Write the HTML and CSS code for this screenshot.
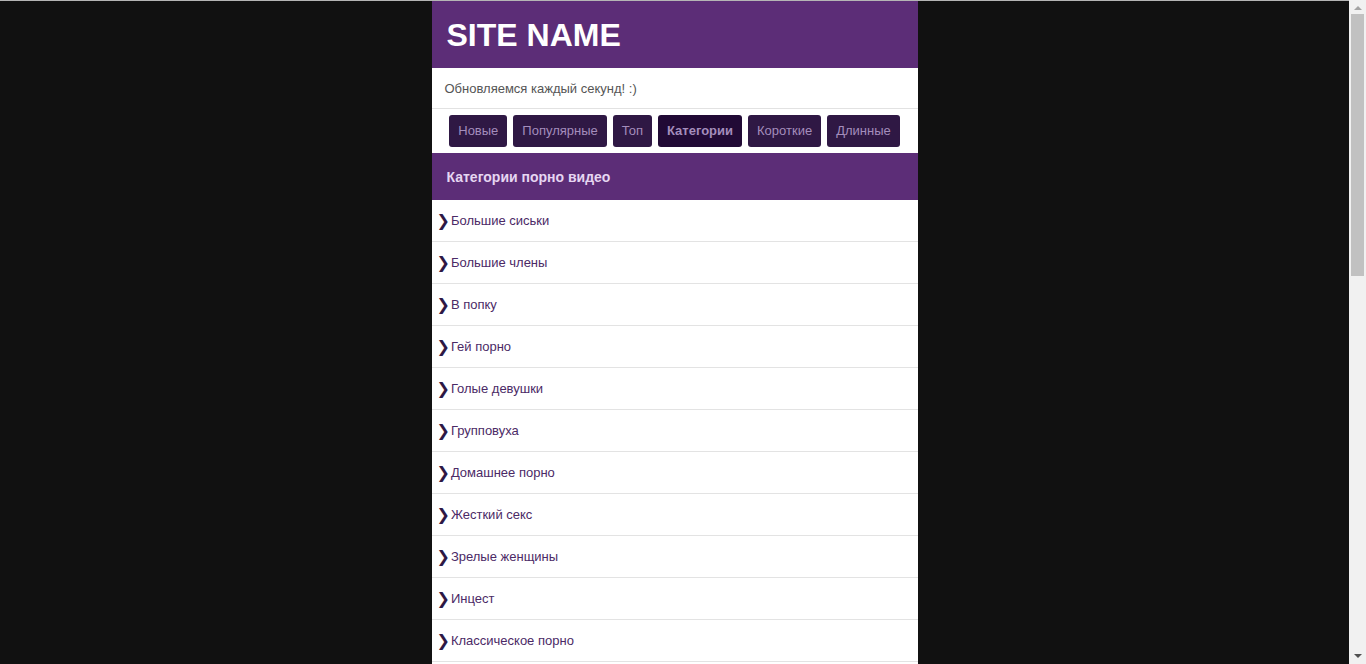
FILE: index.html
```html
<!DOCTYPE html>
<html lang="ru">
<head>
<meta charset="utf-8">
<title>SITE NAME</title>
<link rel="stylesheet" href="styles.css">
</head>
<body>
<div class="page">
  <header class="masthead">
    <h1 class="logo">SITE NAME</h1>
  </header>
  <div class="tagline">Обновляемся каждый секунд! :)</div>
  <nav class="menu">
    <a class="menu-btn" href="#">Новые</a>
    <a class="menu-btn" href="#">Популярные</a>
    <a class="menu-btn" href="#">Топ</a>
    <a class="menu-btn active" href="#">Категории</a>
    <a class="menu-btn" href="#">Короткие</a>
    <a class="menu-btn" href="#">Длинные</a>
  </nav>
  <h2 class="section-title">Категории порно видео</h2>
  <ul class="cats">
    <li><a href="#"><span class="arr">❯</span>Большие сиськи</a></li>
    <li><a href="#"><span class="arr">❯</span>Большие члены</a></li>
    <li><a href="#"><span class="arr">❯</span>В попку</a></li>
    <li><a href="#"><span class="arr">❯</span>Гей порно</a></li>
    <li><a href="#"><span class="arr">❯</span>Голые девушки</a></li>
    <li><a href="#"><span class="arr">❯</span>Групповуха</a></li>
    <li><a href="#"><span class="arr">❯</span>Домашнее порно</a></li>
    <li><a href="#"><span class="arr">❯</span>Жесткий секс</a></li>
    <li><a href="#"><span class="arr">❯</span>Зрелые женщины</a></li>
    <li><a href="#"><span class="arr">❯</span>Инцест</a></li>
    <li><a href="#"><span class="arr">❯</span>Классическое порно</a></li>
    <li><a href="#"><span class="arr">❯</span>Лесбиянки</a></li>
    <li><a href="#"><span class="arr">❯</span>Любительское</a></li>
    <li><a href="#"><span class="arr">❯</span>Массаж</a></li>
    <li><a href="#"><span class="arr">❯</span>Мастурбация</a></li>
    <li><a href="#"><span class="arr">❯</span>Минет</a></li>
    <li><a href="#"><span class="arr">❯</span>Оргии</a></li>
    <li><a href="#"><span class="arr">❯</span>Русское порно</a></li>
    <li><a href="#"><span class="arr">❯</span>Свингеры</a></li>
    <li><a href="#"><span class="arr">❯</span>Студентки</a></li>
    <li><a href="#"><span class="arr">❯</span>Чулки</a></li>
    <li><a href="#"><span class="arr">❯</span>Японки</a></li>
  </ul>
</div>
<!-- classic window scrollbar track, pinned to the right edge -->
<div class="scrollbar" aria-hidden="true">
  <span class="sb-arrow sb-up"></span>
  <span class="sb-thumb"></span>
  <span class="sb-arrow sb-down"></span>
</div>
</body>
</html>
```
FILE: styles.css
```css
html {
  border-top: 1px solid #b5b5b5;
  background: #111111;
}
body {
  margin: 0;
  padding-right: 17px;
  background: #111111;
  font-family: "Liberation Sans", Arial, sans-serif;
  font-size: 13px;
}
.page {
  width: 486px;
  margin: 0 auto;
  background: #ffffff;
}
.masthead {
  background: #5c2d77;
  height: 67px;
  display: flex;
  align-items: center;
  padding: 0 15px;
}
.logo {
  margin: 0;
  color: #ffffff;
  font-size: 32px;
  font-weight: bold;
  line-height: 1;
}
.tagline {
  height: 40px;
  display: flex;
  align-items: center;
  padding: 0 13px;
  color: #555555;
  border-bottom: 1px solid #e2e2e2;
}
.menu {
  height: 44px;
  display: flex;
  justify-content: center;
  align-items: center;
  gap: 6px;
}
.menu-btn {
  display: block;
  height: 32px;
  line-height: 32px;
  padding: 0 9px;
  border-radius: 3px;
  background: #2f1844;
  color: #a48dbc;
  text-decoration: none;
}
.menu-btn.active {
  background: #210a35;
  font-weight: bold;
}
.section-title {
  margin: 0;
  height: 47px;
  display: flex;
  align-items: center;
  padding: 0 15px;
  background: #5c2d77;
  color: #e6d6f2;
  font-size: 14px;
  font-weight: bold;
}
.cats {
  list-style: none;
  margin: 0;
  padding: 0;
}
.cats li {
  border-bottom: 1px solid #e3e3e3;
}
.cats a {
  display: flex;
  align-items: center;
  height: 41px;
  padding: 0 5px;
  color: #4b2a66;
  text-decoration: none;
}
.arr {
  color: #2e1844;
  font-family: "DejaVu Sans", sans-serif;
  font-size: 16px;
  font-weight: bold;
  margin-right: 1px;
}
.scrollbar {
  position: fixed;
  top: 0;
  right: 0;
  width: 17px;
  height: 100%;
  background: #f1f1f1;
}
.sb-thumb {
  position: absolute;
  top: 14px;
  left: 2px;
  width: 13px;
  height: 262px;
  background: #c1c1c1;
}
.sb-arrow {
  position: absolute;
  left: 5px;
  width: 0;
  height: 0;
  border-left: 4px solid transparent;
  border-right: 4px solid transparent;
}
.sb-up {
  top: 6px;
  border-bottom: 4px solid #a3a3a3;
}
.sb-down {
  bottom: 6px;
  border-top: 4px solid #505050;
}
```
